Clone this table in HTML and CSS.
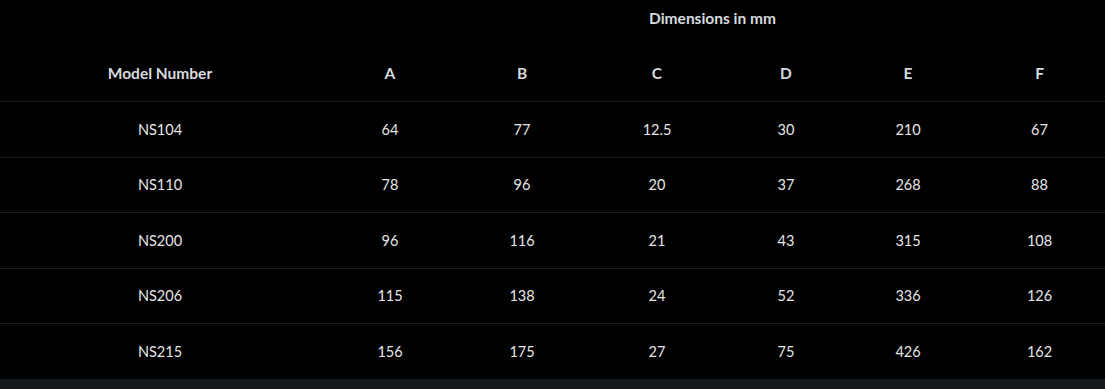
FILE: index.html
```html
<!DOCTYPE html>
<html lang="en">
<head>
<meta charset="utf-8">
<title>Dimensions</title>
<link rel="stylesheet" href="styles.css">
</head>
<body>
<div class="wrap">
<table class="dims">
  <colgroup>
    <col class="w-model"><col class="w-a"><col class="w-b"><col class="w-c"><col class="w-d"><col class="w-e"><col class="w-f">
  </colgroup>
  <thead>
    <tr class="h1">
      <th></th>
      <th colspan="6">Dimensions in mm</th>
    </tr>
    <tr class="h2">
      <th>Model Number</th><th>A</th><th>B</th><th>C</th><th>D</th><th>E</th><th>F</th>
    </tr>
  </thead>
  <tbody>
    <tr><td>NS104</td><td>64</td><td>77</td><td>12.5</td><td>30</td><td>210</td><td>67</td></tr>
    <tr><td>NS110</td><td>78</td><td>96</td><td>20</td><td>37</td><td>268</td><td>88</td></tr>
    <tr><td>NS200</td><td>96</td><td>116</td><td>21</td><td>43</td><td>315</td><td>108</td></tr>
    <tr><td>NS206</td><td>115</td><td>138</td><td>24</td><td>52</td><td>336</td><td>126</td></tr>
    <tr><td>NS215</td><td>156</td><td>175</td><td>27</td><td>75</td><td>426</td><td>162</td></tr>
  </tbody>
</table>
</div>
</body>
</html>
```
FILE: styles.css
```css
html, body {
  margin: 0;
  padding: 0;
}
body {
  background: #15191c;
  font-family: "Lato", "Liberation Sans", sans-serif;
  color: #e6e6e6;
}
.wrap {
  background: #000;
  width: 1105px;
}
.dims {
  width: 1105px;
  border-collapse: collapse;
  table-layout: fixed;
}
.w-model { width: 320px; }
.w-a { width: 140px; }
.w-b { width: 124px; }
.w-c { width: 146px; }
.w-d { width: 112px; }
.w-e { width: 132px; }
.w-f { width: 131px; }
.dims th, .dims td {
  padding: 0;
  text-align: center;
}
.dims th {
  font-weight: 700;
  font-size: 15.5px;
  color: #d6dade;
}
.h1 th {
  height: 45px;
  vertical-align: top;
  padding-top: 9px;
  box-sizing: border-box;
}
.h2 th {
  height: 56px;
  vertical-align: middle;
  border-bottom: 1px solid #1c1c1c;
}
.dims td {
  font-size: 14.5px;
  height: 54.5px;
  vertical-align: middle;
  border-bottom: 1px solid #1c1c1c;
}
.dims tbody tr:last-child td {
  border-bottom: 0;
}
```
